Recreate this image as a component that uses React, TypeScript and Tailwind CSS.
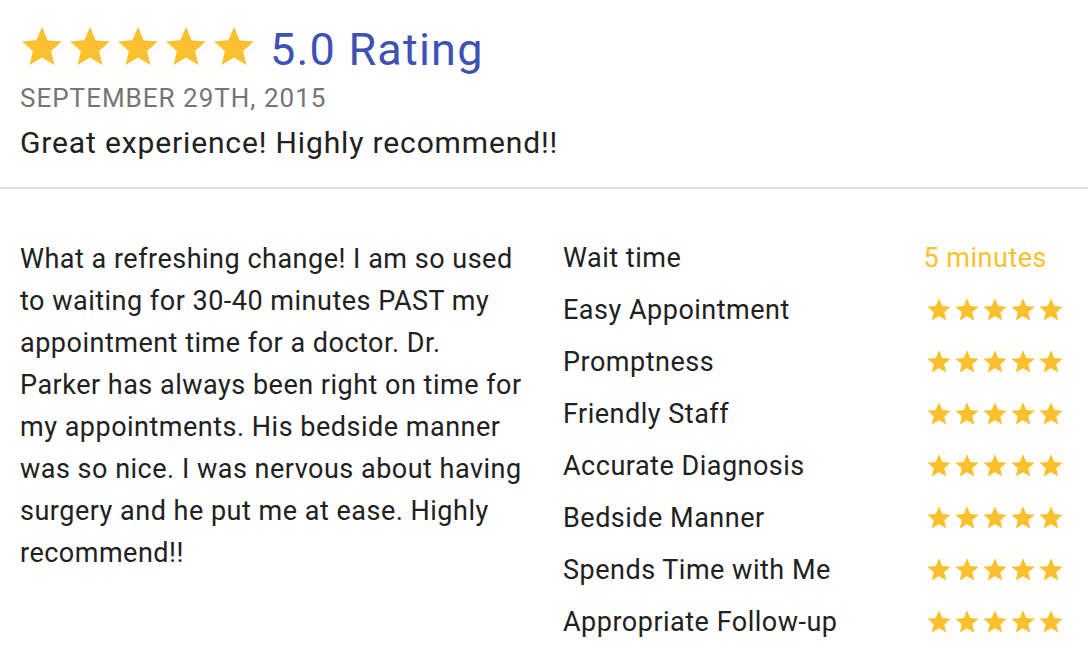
import React from "react";

const STAR = "M12 17.27L18.18 21l-1.64-7.03L22 9.24l-7.19-.61L12 2 9.19 8.63 2 9.24l5.46 4.73L5.82 21z";

function Star({ size }: { size: number }) {
  return (
    <svg width={size} height={size} viewBox="0 0 24 24" className="shrink-0 block">
      <path d={STAR} fill="#fbc02d" />
    </svg>
  );
}

const rows = [
  "Easy Appointment",
  "Promptness",
  "Friendly Staff",
  "Accurate Diagnosis",
  "Bedside Manner",
  "Spends Time with Me",
  "Appropriate Follow-up",
];

const lines = [
  "What a refreshing change! I am so used",
  "to waiting for 30-40 minutes PAST my",
  "appointment time for a doctor. Dr.",
  "Parker has always been right on time for",
  "my appointments. His bedside manner",
  "was so nice. I was nervous about having",
  "surgery and he put me at ease. Highly",
  "recommend!!",
];

export default function App() {
  return (
    <div className="w-[1088px] h-[666px] bg-white overflow-hidden font-['Roboto',sans-serif] text-[#212121]">
      <div className="px-5 pt-[23px] pb-[24px]">
        <div className="flex items-start">
          <div className="flex ml-[-2px]">
            {[0, 1, 2, 3, 4].map((i) => (
              <Star key={i} size={48} />
            ))}
          </div>
          <span className="ml-[12px] mt-[3px] text-[45px] leading-[48px] tracking-[1.2px] text-[#3f51b5] whitespace-nowrap">
            5.0 Rating
          </span>
        </div>
        <div className="text-[26px] leading-[30px] text-[#757575] tracking-[1px] mt-[9px]">SEPTEMBER 29TH, 2015</div>
        <div className="text-[30px] leading-[40px] tracking-[0.86px] mt-[10px] whitespace-nowrap">
          Great experience! Highly recommend!!
        </div>
      </div>
      <div className="h-[2px] bg-[#e0e0e0]" />
      <div className="flex items-start px-5 pt-[43px]">
        <p className="w-[543px] shrink-0 mt-[6px] text-[27px] leading-[42px] tracking-[0.5px]">
          {lines.map((l, i) => (
            <span key={i} className="block whitespace-nowrap">
              {l}
            </span>
          ))}
        </p>
        <div className="w-[502px] shrink-0 flex flex-col text-[27px] tracking-[0.5px]">
          <div className="flex items-center justify-between h-[52px]">
            <span>Wait time</span>
            <span className="text-[#fbc02d] mr-[18px]">5 minutes</span>
          </div>
          {rows.map((r) => (
            <div key={r} className="flex items-center justify-between h-[52px]">
              <span className="whitespace-nowrap">{r}</span>
              <div className="flex">
                {[0, 1, 2, 3, 4].map((i) => (
                  <Star key={i} size={28} />
                ))}
              </div>
            </div>
          ))}
        </div>
      </div>
    </div>
  );
}
